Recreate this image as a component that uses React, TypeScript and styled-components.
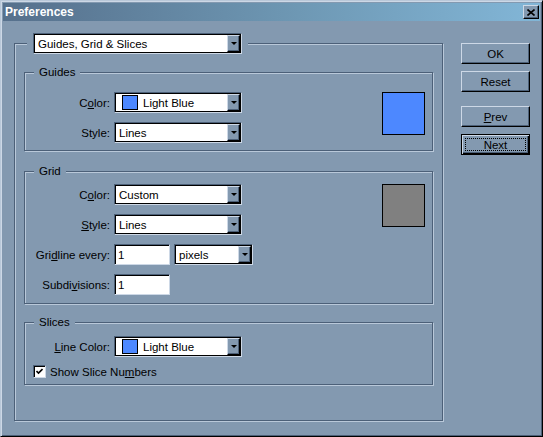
import React from "react";
import styled, { createGlobalStyle } from "styled-components";

const FACE = "#8399b0";
const SHADOW = "#4c6078";
const LIGHT = "#b9c8d9";
const HILITE = "#cdd8e6";

const GlobalStyle = createGlobalStyle`
  html, body {
    margin: 0;
    padding: 0;
    background: ${FACE};
  }
  body {
    font-family: "Liberation Sans", Arial, sans-serif;
    font-size: 11.5px;
    color: #000;
  }
`;

const Window = styled.div`
  box-sizing: border-box;
  width: 543px;
  height: 437px;
  padding: 2px;
  display: flex;
  flex-direction: column;
  background: ${FACE};
  border: 1px solid;
  border-color: ${LIGHT} #000 #000 ${LIGHT};
  box-shadow: inset 1px 1px 0 ${HILITE}, inset -1px -1px 0 ${SHADOW};
`;

const TitleBar = styled.div`
  height: 18px;
  display: flex;
  align-items: center;
  justify-content: space-between;
  padding: 0 1px 0 2px;
  background: linear-gradient(90deg, #56708c 0%, #6e98b4 55%, #82b6d7 100%);
`;

const TitleText = styled.span`
  color: #fff;
  font-weight: bold;
  font-size: 12px;
`;

const Raised = styled.div`
  box-sizing: border-box;
  background: ${FACE};
  border: 1px solid;
  border-color: ${HILITE} #000 #000 ${HILITE};
  box-shadow: inset -1px -1px 0 ${SHADOW};
`;

const CloseButton = styled(Raised)`
  width: 16px;
  height: 14px;
  display: flex;
  align-items: center;
  justify-content: center;
`;

const Body = styled.div`
  display: flex;
  align-items: flex-start;
  padding: 22px 0 0 11px;
`;

const OuterGroup = styled.div`
  position: relative;
  box-sizing: border-box;
  width: 429px;
  height: 378px;
  padding: 28px 9px 0 9px;
  border: 1px solid ${SHADOW};
  box-shadow: inset 1px 1px 0 ${LIGHT}, 1px 1px 0 ${LIGHT};
`;

const Legend = styled.div`
  position: absolute;
  top: -11px;
  left: 12px;
  padding: 0 6px;
  background: ${FACE};
`;

const Group = styled.div<{ $height: number; $top: number; $padTop: number }>`
  position: relative;
  box-sizing: border-box;
  height: ${(p) => p.$height}px;
  margin-top: ${(p) => p.$top}px;
  padding: ${(p) => p.$padTop}px 0 0 0;
  border: 1px solid ${SHADOW};
  box-shadow: inset 1px 1px 0 ${LIGHT}, 1px 1px 0 ${LIGHT};
`;

const Caption = styled.span`
  position: absolute;
  top: -7px;
  left: 9px;
  padding: 0 5px;
  line-height: 13px;
  background: ${FACE};
`;

const GroupContent = styled.div`
  display: flex;
  justify-content: space-between;
  align-items: flex-start;
`;

const Form = styled.div`
  display: grid;
  grid-template-columns: 85px auto;
  column-gap: 4px;
  row-gap: 9px;
  align-items: center;
`;

const Label = styled.span`
  text-align: right;
  white-space: nowrap;
`;

const Key = styled.span`
  text-decoration: underline;
  text-underline-offset: 1px;
`;

const Inline = styled.div`
  display: flex;
  gap: 4px;
`;

const Combo = styled.div<{ $width: number }>`
  box-sizing: border-box;
  width: ${(p) => p.$width}px;
  height: 21px;
  padding: 1px;
  display: flex;
  background: #fff;
  border: 1px solid;
  border-color: ${SHADOW} ${HILITE} ${HILITE} ${SHADOW};
  box-shadow: inset 1px 1px 0 #000, inset -1px -1px 0 #000;
`;

const ComboText = styled.div`
  flex: 1;
  display: flex;
  align-items: center;
  gap: 5px;
  padding-left: 3px;
  white-space: nowrap;
`;

const ColorChip = styled.span<{ $color: string }>`
  box-sizing: border-box;
  width: 16px;
  height: 15px;
  margin-left: 3px;
  border: 1px solid #000;
  background: ${(p) => p.$color};
`;

const ArrowButton = styled(Raised)`
  width: 13px;
  display: flex;
  align-items: center;
  justify-content: center;
`;

const Arrow = styled.span`
  width: 0;
  height: 0;
  border-left: 3px solid transparent;
  border-right: 3px solid transparent;
  border-top: 3px solid #000;
`;

const TextField = styled.input`
  box-sizing: border-box;
  width: 56px;
  height: 21px;
  margin: 0;
  padding: 0 2px 0 3px;
  font: inherit;
  color: #000;
  background: #fff;
  border: 1px solid;
  border-color: ${SHADOW} ${HILITE} ${HILITE} ${SHADOW};
  box-shadow: inset 1px 1px 0 #000;
  outline: none;
`;

const Swatch = styled.div<{ $color: string }>`
  box-sizing: border-box;
  width: 43px;
  height: 43px;
  margin-right: 7px;
  border: 1px solid #000;
  background: ${(p) => p.$color};
`;

const CheckRow = styled.label`
  display: flex;
  align-items: center;
  gap: 4px;
  margin: 8px 0 0 8px;
`;

const CheckBox = styled.span`
  box-sizing: border-box;
  width: 13px;
  height: 13px;
  display: flex;
  align-items: center;
  justify-content: center;
  background: #fff;
  border: 1px solid;
  border-color: ${SHADOW} ${HILITE} ${HILITE} ${SHADOW};
  box-shadow: inset 1px 1px 0 #000;
`;

const ButtonColumn = styled.div`
  display: flex;
  flex-direction: column;
  margin-left: 18px;
`;

const Button = styled(Raised)<{ $gap?: number; $default?: boolean }>`
  width: 69px;
  height: 21px;
  margin-top: ${(p) => p.$gap ?? 0}px;
  display: flex;
  align-items: center;
  justify-content: center;
  ${(p) =>
    p.$default &&
    `
    border-color: #000;
    box-shadow: inset 1px 1px 0 ${HILITE}, inset -1px -1px 0 #000, inset -2px -2px 0 ${SHADOW};
  `}
`;

const FocusRing = styled.span`
  box-sizing: border-box;
  width: 61px;
  height: 13px;
  display: flex;
  align-items: center;
  justify-content: center;
  border: 1px dotted #000;
`;

const Dropdown: React.FC<{ width: number; chip?: string; children: React.ReactNode }> = ({
  width,
  chip,
  children,
}) => (
  <Combo $width={width}>
    <ComboText>
      {chip && <ColorChip $color={chip} />}
      <span>{children}</span>
    </ComboText>
    <ArrowButton>
      <Arrow />
    </ArrowButton>
  </Combo>
);

export default function App() {
  return (
    <>
      <GlobalStyle />
      <Window>
        <TitleBar>
          <TitleText>Preferences</TitleText>
          <CloseButton>
            <svg width="8" height="7" viewBox="0 0 8 7">
              <path d="M0.5 0.5L7.5 6.5M7.5 0.5L0.5 6.5" stroke="#000" strokeWidth="1.6" />
            </svg>
          </CloseButton>
        </TitleBar>
        <Body>
          <OuterGroup>
            <Legend>
              <Dropdown width={209}>Guides, Grid &amp; Slices</Dropdown>
            </Legend>

            <Group $height={79} $top={0} $padTop={19}>
              <Caption>Guides</Caption>
              <GroupContent>
                <Form>
                  <Label>
                    C<Key>o</Key>lor:
                  </Label>
                  <Dropdown width={128} chip="#4d88ff">
                    Light Blue
                  </Dropdown>
                  <Label>Style:</Label>
                  <Dropdown width={128}>Lines</Dropdown>
                </Form>
                <Swatch $color="#4d88ff" />
              </GroupContent>
            </Group>

            <Group $height={133} $top={20} $padTop={12}>
              <Caption>Grid</Caption>
              <GroupContent>
                <Form>
                  <Label>
                    C<Key>o</Key>lor:
                  </Label>
                  <Dropdown width={128}>Custom</Dropdown>
                  <Label>
                    <Key>S</Key>tyle:
                  </Label>
                  <Dropdown width={128}>Lines</Dropdown>
                  <Label>
                    Gri<Key>d</Key>line every:
                  </Label>
                  <Inline>
                    <TextField defaultValue="1" />
                    <Dropdown width={79}>pixels</Dropdown>
                  </Inline>
                  <Label>
                    Subdi<Key>v</Key>isions:
                  </Label>
                  <TextField defaultValue="1" />
                </Form>
                <Swatch $color="#808080" />
              </GroupContent>
            </Group>

            <Group $height={63} $top={18} $padTop={13}>
              <Caption>Slices</Caption>
              <Form>
                <Label>
                  <Key>L</Key>ine Color:
                </Label>
                <Dropdown width={128} chip="#4d88ff">
                  Light Blue
                </Dropdown>
              </Form>
              <CheckRow>
                <CheckBox>
                  <svg width="7" height="7" viewBox="0 0 7 7">
                    <path d="M0.5 3L2.5 5L6.5 1" stroke="#000" strokeWidth="1.6" fill="none" />
                  </svg>
                </CheckBox>
                <span>
                  Show Slice Nu<Key>m</Key>bers
                </span>
              </CheckRow>
            </Group>
          </OuterGroup>

          <ButtonColumn>
            <Button>OK</Button>
            <Button $gap={7}>Reset</Button>
            <Button $gap={14}>
              <span>
                <Key>P</Key>rev
              </span>
            </Button>
            <Button $gap={7} $default>
              <FocusRing>Next</FocusRing>
            </Button>
          </ButtonColumn>
        </Body>
      </Window>
    </>
  );
}
